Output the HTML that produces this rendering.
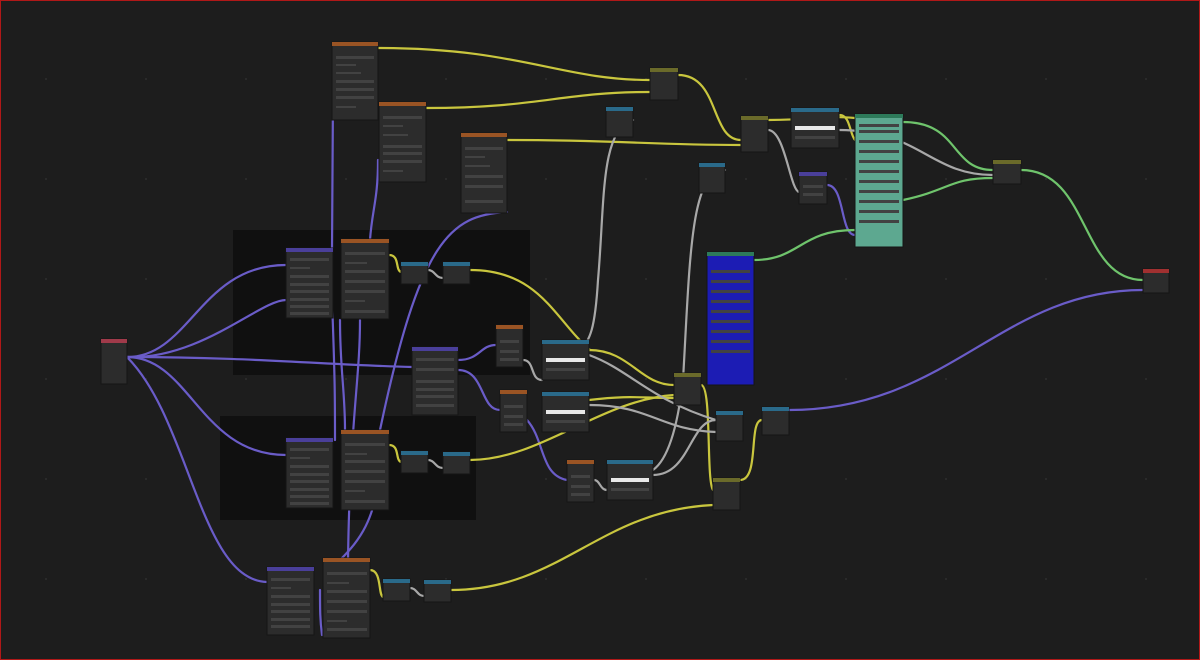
<!DOCTYPE html>
<html><head><meta charset="utf-8"><style>
html,body{margin:0;padding:0;background:#1d1d1d;}
svg{display:block;}
</style></head><body>
<svg width="1200" height="660" viewBox="0 0 1200 660" xmlns="http://www.w3.org/2000/svg">
<defs>
<pattern id="g" width="100" height="100" patternUnits="userSpaceOnUse" x="-2" y="-2">
<rect x="47" y="80" width="2" height="2" fill="#2a2a2a"/>
</pattern>
</defs>
<rect width="1200" height="660" fill="#1d1d1d"/>
<rect width="1200" height="660" fill="url(#g)"/>
<rect x="233" y="230" width="297" height="145" fill="#101010"/>
<rect x="220" y="416" width="256" height="104" fill="#101010"/>

<g fill="none" stroke-width="2.2" stroke-linecap="round">
<g stroke="#6a5cc8">
<path d="M127 357 C190 357 200 265 286 265"/>
<path d="M127 357 C190 357 200 455 286 455"/>
<path d="M127 357 C250 357 330 365 412 367"/>
<path d="M127 357 C190 420 200 580 267 582"/>
<path d="M127 357 C200 360 260 300 286 300"/>
<path d="M333 95 C333 150 332 200 332 250"/>
<path d="M378 160 C378 200 372 210 370 240"/>
<path d="M340 320 C340 370 345 390 345 430"/>
<path d="M360 320 C360 380 350 420 348 560"/>
<path d="M332 300 C335 380 335 400 335 440"/>
<path d="M320 590 C320 610 320 620 322 635"/>
<path d="M458 360 C480 360 480 345 496 345"/>
<path d="M458 370 C485 370 480 410 500 410"/>
<path d="M507 212 C450 215 420 240 380 430"/>
<path d="M380 470 C375 520 360 540 340 560"/>
<path d="M527 420 C545 440 540 475 567 480"/>
<path d="M827 185 C845 185 840 235 855 235"/>
<path d="M789 410 C950 410 1000 290 1143 290"/>
</g>
<g stroke="#c9c63e">
<path d="M378 48 C520 48 560 80 650 80"/>
<path d="M426 108 C540 108 560 92 650 92"/>
<path d="M507 140 C620 140 650 145 741 145"/>
<path d="M678 75 C720 75 710 140 741 140"/>
<path d="M768 120 C820 120 820 115 855 118"/>
<path d="M470 270 C540 270 555 320 590 350"/>
<path d="M389 255 C400 255 395 270 401 272"/>
<path d="M389 445 C400 445 395 460 401 462"/>
<path d="M470 460 C540 460 600 400 674 395"/>
<path d="M451 590 C560 590 600 510 713 505"/>
<path d="M370 570 C382 570 378 595 383 597"/>
<path d="M589 350 C630 350 640 385 674 385"/>
<path d="M701 385 C712 385 706 480 713 490"/>
<path d="M740 480 C760 480 748 420 762 420"/>
<path d="M589 400 C630 395 640 398 674 398"/>
<path d="M840 115 C850 115 850 135 855 140"/>
</g>
<g stroke="#a8a8a8">
<path d="M633 120 C600 130 605 200 598 280 C595 330 590 340 580 350"/>
<path d="M725 170 C690 170 690 260 683 380 C675 450 660 465 653 470"/>
<path d="M839 130 C920 130 930 175 993 175"/>
<path d="M768 130 C785 130 790 190 799 192"/>
<path d="M589 405 C650 405 660 430 716 432"/>
<path d="M653 475 C690 475 690 420 716 420"/>
<path d="M523 360 C535 360 530 380 542 380"/>
<path d="M589 355 C630 370 650 400 716 420"/>
<path d="M428 270 C435 270 435 278 443 278"/>
<path d="M428 460 C435 460 435 468 443 468"/>
<path d="M410 588 C417 588 417 596 424 596"/>
<path d="M594 480 C600 480 600 490 607 490"/>
</g>
<g stroke="#6fc46c">
<path d="M903 122 C960 122 950 170 993 170"/>
<path d="M903 200 C950 190 950 178 993 178"/>
<path d="M754 260 C800 260 800 230 855 230"/>
<path d="M1021 170 C1090 170 1080 280 1143 280"/>
</g>
</g>

<g stroke="#151515" stroke-width="1">
<g fill="#2c2c2c">
<rect x="101" y="339" width="26" height="45"/>
<rect x="332" y="42" width="46" height="78"/>
<rect x="379" y="102" width="47" height="80"/>
<rect x="461" y="133" width="46" height="80"/>
<rect x="286" y="248" width="47" height="70"/>
<rect x="341" y="239" width="48" height="80"/>
<rect x="401" y="262" width="27" height="22"/>
<rect x="443" y="262" width="27" height="22"/>
<rect x="412" y="347" width="46" height="68"/>
<rect x="496" y="325" width="27" height="42"/>
<rect x="500" y="390" width="27" height="42"/>
<rect x="542" y="340" width="47" height="40"/>
<rect x="542" y="392" width="47" height="40"/>
<rect x="286" y="438" width="47" height="70"/>
<rect x="341" y="430" width="48" height="80"/>
<rect x="401" y="451" width="27" height="22"/>
<rect x="443" y="452" width="27" height="22"/>
<rect x="267" y="567" width="47" height="68"/>
<rect x="323" y="558" width="47" height="80"/>
<rect x="383" y="579" width="27" height="22"/>
<rect x="424" y="580" width="27" height="22"/>
<rect x="567" y="460" width="27" height="42"/>
<rect x="607" y="460" width="46" height="40"/>
<rect x="650" y="68" width="28" height="32"/>
<rect x="606" y="107" width="27" height="30"/>
<rect x="699" y="163" width="26" height="30"/>
<rect x="741" y="116" width="27" height="36"/>
<rect x="791" y="108" width="48" height="40"/>
<rect x="799" y="172" width="28" height="32"/>
<rect x="674" y="373" width="27" height="32"/>
<rect x="716" y="411" width="27" height="30"/>
<rect x="762" y="407" width="27" height="28"/>
<rect x="713" y="478" width="27" height="32"/>
<rect x="993" y="160" width="28" height="24"/>
<rect x="1143" y="269" width="26" height="24"/>
</g>
<rect x="855" y="114" width="48" height="133" fill="#5da890"/>
<rect x="707" y="252" width="47" height="133" fill="#1c1cb4"/>
</g>
<g>
<rect x="101" y="339" width="26" height="4" fill="#a03a4a"/>
<g fill="#9a5424">
<rect x="332" y="42" width="46" height="4"/><rect x="379" y="102" width="47" height="4"/>
<rect x="461" y="133" width="46" height="4"/><rect x="341" y="239" width="48" height="4"/>
<rect x="496" y="325" width="27" height="4"/><rect x="500" y="390" width="27" height="4"/>
<rect x="341" y="430" width="48" height="4"/><rect x="323" y="558" width="47" height="4"/>
<rect x="567" y="460" width="27" height="4"/>
</g>
<g fill="#4a3f9a">
<rect x="286" y="248" width="47" height="4"/><rect x="412" y="347" width="46" height="4"/>
<rect x="286" y="438" width="47" height="4"/><rect x="267" y="567" width="47" height="4"/>
<rect x="799" y="172" width="28" height="4"/>
</g>
<g fill="#2a6a8a">
<rect x="401" y="262" width="27" height="4"/><rect x="443" y="262" width="27" height="4"/>
<rect x="542" y="340" width="47" height="4"/><rect x="542" y="392" width="47" height="4"/>
<rect x="401" y="451" width="27" height="4"/><rect x="443" y="452" width="27" height="4"/>
<rect x="383" y="579" width="27" height="4"/><rect x="424" y="580" width="27" height="4"/>
<rect x="607" y="460" width="46" height="4"/><rect x="606" y="107" width="27" height="4"/>
<rect x="699" y="163" width="26" height="4"/><rect x="791" y="108" width="48" height="4"/>
<rect x="716" y="411" width="27" height="4"/><rect x="762" y="407" width="27" height="4"/>
</g>
<g fill="#6a6a2a">
<rect x="650" y="68" width="28" height="4"/><rect x="741" y="116" width="27" height="4"/>
<rect x="674" y="373" width="27" height="4"/><rect x="713" y="478" width="27" height="4"/>
<rect x="993" y="160" width="28" height="4"/>
</g>
<rect x="1143" y="269" width="26" height="4" fill="#a03030"/>
<rect x="855" y="114" width="48" height="4" fill="#2d7a5a"/>
<rect x="707" y="252" width="47" height="4" fill="#2d7a5a"/>
</g>
<g fill="#424242">
<rect x="336" y="56" width="38" height="3"/><rect x="336" y="64" width="20" height="2"/><rect x="336" y="72" width="25" height="2"/><rect x="336" y="80" width="38" height="3"/><rect x="336" y="88" width="38" height="3"/><rect x="336" y="96" width="38" height="3"/><rect x="336" y="106" width="20" height="2"/>
<rect x="383" y="116" width="39" height="3"/><rect x="383" y="125" width="20" height="2"/><rect x="383" y="134" width="25" height="2"/><rect x="383" y="145" width="39" height="3"/><rect x="383" y="152" width="39" height="3"/><rect x="383" y="160" width="39" height="3"/><rect x="383" y="170" width="20" height="2"/>
<rect x="465" y="147" width="38" height="3"/><rect x="465" y="156" width="20" height="2"/><rect x="465" y="165" width="25" height="2"/><rect x="465" y="175" width="38" height="3"/><rect x="465" y="185" width="38" height="3"/><rect x="465" y="200" width="38" height="3"/>
<rect x="290" y="258" width="39" height="3"/><rect x="290" y="267" width="20" height="2"/><rect x="290" y="275" width="39" height="3"/><rect x="290" y="283" width="39" height="3"/><rect x="290" y="290" width="39" height="3"/><rect x="290" y="298" width="39" height="3"/><rect x="290" y="305" width="39" height="3"/><rect x="290" y="312" width="39" height="3"/>
<rect x="345" y="252" width="40" height="3"/><rect x="345" y="262" width="22" height="2"/><rect x="345" y="270" width="40" height="3"/><rect x="345" y="280" width="40" height="3"/><rect x="345" y="290" width="40" height="3"/><rect x="345" y="300" width="20" height="2"/><rect x="345" y="310" width="40" height="3"/>
<rect x="290" y="448" width="39" height="3"/><rect x="290" y="457" width="20" height="2"/><rect x="290" y="465" width="39" height="3"/><rect x="290" y="473" width="39" height="3"/><rect x="290" y="480" width="39" height="3"/><rect x="290" y="488" width="39" height="3"/><rect x="290" y="495" width="39" height="3"/><rect x="290" y="502" width="39" height="3"/>
<rect x="345" y="443" width="40" height="3"/><rect x="345" y="453" width="22" height="2"/><rect x="345" y="460" width="40" height="3"/><rect x="345" y="470" width="40" height="3"/><rect x="345" y="480" width="40" height="3"/><rect x="345" y="490" width="20" height="2"/><rect x="345" y="500" width="40" height="3"/>
<rect x="271" y="578" width="39" height="3"/><rect x="271" y="587" width="20" height="2"/><rect x="271" y="595" width="39" height="3"/><rect x="271" y="603" width="39" height="3"/><rect x="271" y="610" width="39" height="3"/><rect x="271" y="618" width="39" height="3"/><rect x="271" y="625" width="39" height="3"/>
<rect x="327" y="572" width="40" height="3"/><rect x="327" y="582" width="22" height="2"/><rect x="327" y="590" width="40" height="3"/><rect x="327" y="600" width="40" height="3"/><rect x="327" y="610" width="40" height="3"/><rect x="327" y="620" width="20" height="2"/><rect x="327" y="628" width="40" height="3"/>
<rect x="416" y="358" width="38" height="3"/><rect x="416" y="368" width="38" height="3"/><rect x="416" y="380" width="38" height="3"/><rect x="416" y="388" width="38" height="3"/><rect x="416" y="395" width="38" height="3"/><rect x="416" y="404" width="38" height="3"/>
<rect x="500" y="340" width="19" height="3"/><rect x="500" y="350" width="19" height="3"/><rect x="500" y="358" width="19" height="3"/>
<rect x="504" y="405" width="19" height="3"/><rect x="504" y="415" width="19" height="3"/><rect x="504" y="423" width="19" height="3"/>
<rect x="571" y="475" width="19" height="3"/><rect x="571" y="485" width="19" height="3"/><rect x="571" y="493" width="19" height="3"/>
<rect x="546" y="368" width="39" height="3"/><rect x="546" y="420" width="39" height="3"/><rect x="611" y="488" width="38" height="3"/><rect x="795" y="136" width="40" height="3"/>
<rect x="803" y="185" width="20" height="3"/><rect x="803" y="193" width="20" height="3"/>
<rect x="859" y="124" width="40" height="3"/><rect x="859" y="130" width="40" height="3"/><rect x="859" y="140" width="40" height="3"/><rect x="859" y="150" width="40" height="3"/><rect x="859" y="160" width="40" height="3"/><rect x="859" y="170" width="40" height="3"/><rect x="859" y="180" width="40" height="3"/><rect x="859" y="190" width="40" height="3"/><rect x="859" y="200" width="40" height="3"/><rect x="859" y="210" width="40" height="3"/><rect x="859" y="220" width="40" height="3"/>
<rect x="711" y="270" width="39" height="3"/><rect x="711" y="280" width="39" height="3"/><rect x="711" y="290" width="39" height="3"/><rect x="711" y="300" width="39" height="3"/><rect x="711" y="310" width="39" height="3"/><rect x="711" y="320" width="39" height="3"/><rect x="711" y="330" width="39" height="3"/><rect x="711" y="340" width="39" height="3"/><rect x="711" y="350" width="39" height="3"/>
</g>
<g fill="#e8e8e8">
<rect x="546" y="358" width="39" height="4"/><rect x="546" y="410" width="39" height="4"/>
<rect x="611" y="478" width="38" height="4"/><rect x="795" y="126" width="40" height="4"/>
</g>
<rect x="0.5" y="0.5" width="1199" height="659" fill="none" stroke="#b01818" stroke-width="1"/>
</svg>
</body></html>
